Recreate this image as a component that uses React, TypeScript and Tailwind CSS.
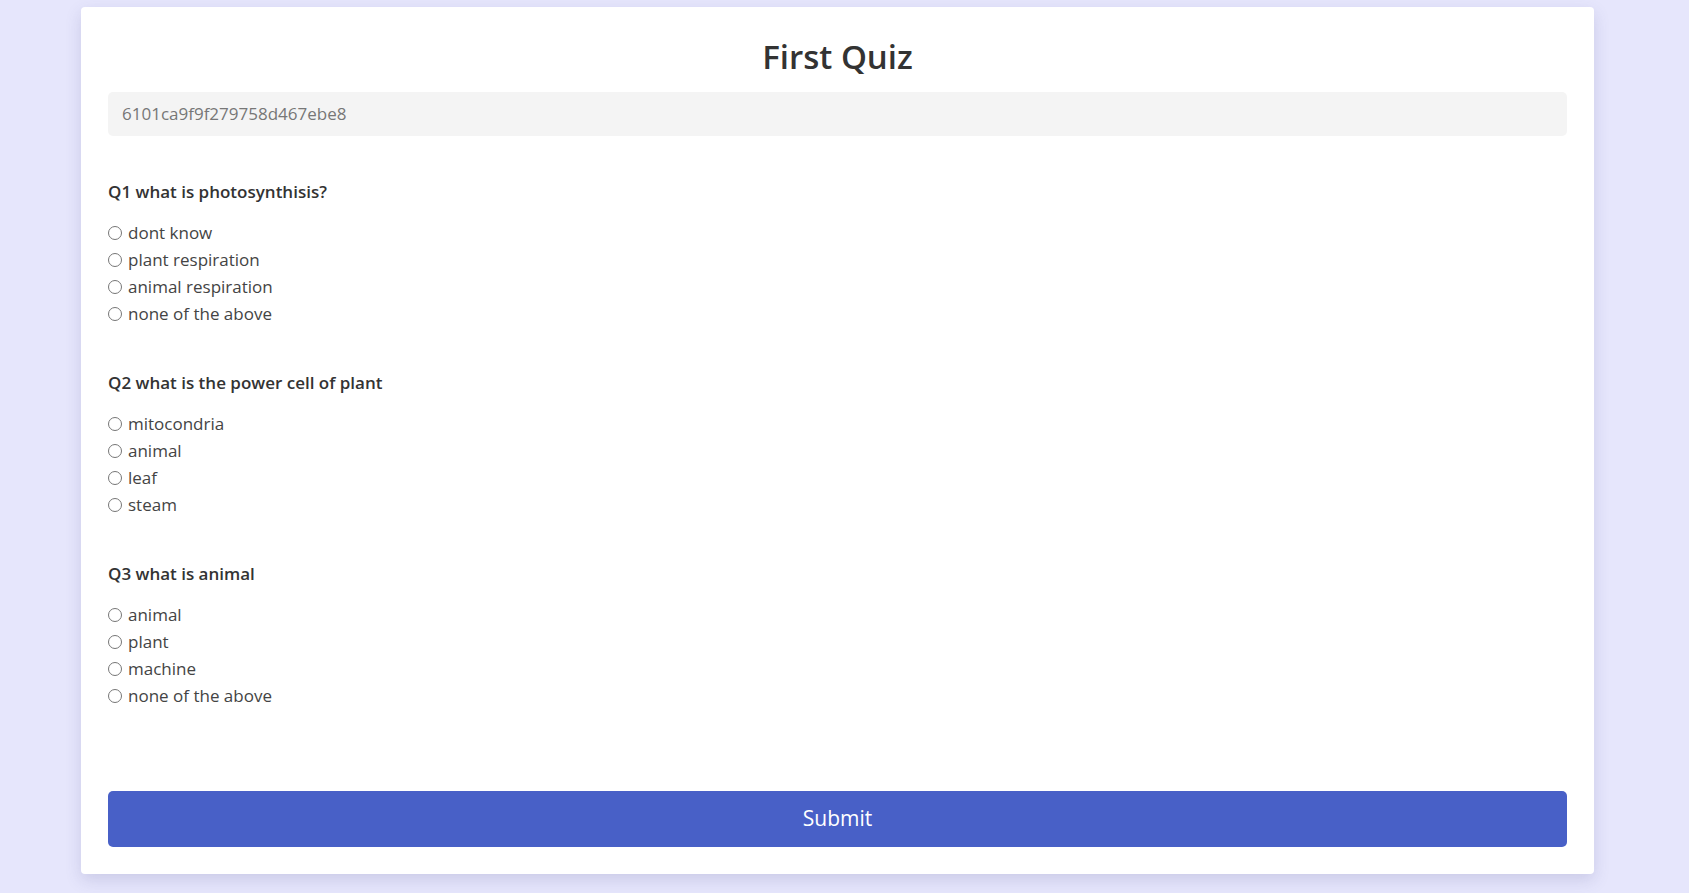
import React, { useState } from 'react';

interface Question {
  id: number;
  label: string;
  options: string[];
}

const questions: Question[] = [
  { id: 1, label: 'Q1 what is photosynthisis?', options: ['dont know', 'plant respiration', 'animal respiration', 'none of the above'] },
  { id: 2, label: 'Q2 what is the power cell of plant', options: ['mitocondria', 'animal', 'leaf', 'steam'] },
  { id: 3, label: 'Q3 what is animal', options: ['animal', 'plant', 'machine', 'none of the above'] },
];

const font = { fontFamily: '"Open Sans", "Noto Sans", sans-serif' };

export default function App() {
  const [answers, setAnswers] = useState<Record<number, string>>({});

  return (
    <div className="min-h-screen bg-[#e6e6fc] pt-[7px] pb-[19px]" style={font}>
      <div className="ml-[81px] w-[1513px] bg-white rounded-[4px] shadow-[0_6px_16px_rgba(80,80,140,0.18)] px-[27px] pt-[29px] pb-[27px]">
        {/* Header */}
        <h2 className="text-center text-[33px] leading-[42px] font-semibold text-[#333]">First Quiz</h2>
        <div className="mt-[14px] h-[44px] bg-[#f4f4f4] rounded-[5px] flex items-center px-[14px] text-[17px] text-[#777]">
          6101ca9f9f279758d467ebe8
        </div>

        {/* Questions */}
        {questions.map(q => (
          <div key={q.id} className="mt-[42px]">
            <p className="text-[17px] leading-[27px] font-semibold text-[#333] mb-[14px]">{q.label}</p>
            {q.options.map(opt => (
              <label
                key={opt}
                onClick={() => setAnswers(prev => ({ ...prev, [q.id]: opt }))}
                className="flex items-center h-[27px] text-[17px] text-[#444] cursor-pointer"
              >
                <span className="w-[14px] h-[14px] rounded-full border border-[#767676] bg-white flex items-center justify-center mr-[6px]">
                  {answers[q.id] === opt && <span className="w-[8px] h-[8px] rounded-full bg-[#333]" />}
                </span>
                {opt}
              </label>
            ))}
          </div>
        ))}

        <button className="mt-[82px] w-full h-[56px] bg-[#4860c7] rounded-[5px] text-white text-[21px]">
          Submit
        </button>
      </div>
    </div>
  );
}
